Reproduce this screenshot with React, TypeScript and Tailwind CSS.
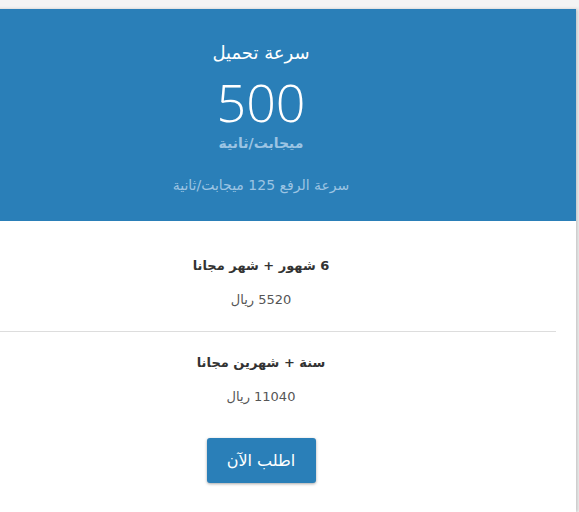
const plans = [
  { title: "6 شهور + شهر مجانا", price: "5520" },
  { title: "سنة + شهرين مجانا", price: "11040" },
];

const PriceCard = () => {
  return (
    <div className="min-h-[512px] w-[579px] overflow-hidden bg-[#f4f4f4] pt-[9px]" dir="rtl">
      <div
        className="-ml-[54px] w-[630px] min-h-[503px] bg-white shadow-[2px_0_3px_rgba(0,0,0,0.18)]"
        style={{ marginRight: "auto" }}
      >
        <div className="flex h-[212px] flex-col items-center bg-[#2a7fb8] pt-[32px] text-center">
          <h3 className="text-[18px] leading-[24px] text-white">سرعة تحميل</h3>
          <div className="mt-[15px] font-['Open_Sans',sans-serif] text-[52px] font-light leading-[44px] text-white">
            500
          </div>
          <div className="mt-[10px] text-[14px] font-bold leading-[18px] text-[#9cc4e3]">ميجابت/ثانية</div>
          <div className="mt-[23px] text-[14px] leading-[20px] text-[#9cc4e3]">سرعة الرفع 125 ميجابت/ثانية</div>
        </div>

        <div className="flex flex-col">
          {plans.map((p, i) => (
            <div
              key={p.price}
              className={
                i === 0
                  ? "mx-[20px] flex flex-col items-center border-b border-[#dddddd] pb-[21px] pt-[35px]"
                  : "mx-[20px] flex flex-col items-center pt-[21px]"
              }
            >
              <div className="text-[13px] font-bold leading-[20px] text-[#333333]">{p.title}</div>
              <div className="mt-[14px] text-[13px] leading-[20px] text-[#555555]">
                {p.price} ريال
              </div>
            </div>
          ))}
        </div>

        <div className="flex justify-center pt-[31px]">
          <button className="h-[45px] w-[109px] rounded-[3px] bg-[#2a7fb8] text-[16px] text-white shadow-[0_1px_3px_rgba(0,0,0,0.35)]">
            اطلب الآن
          </button>
        </div>
      </div>
    </div>
  );
};

export default function App() {
  return (
    <div className="font-['DejaVu_Sans',sans-serif]">
      <PriceCard />
    </div>
  );
}
